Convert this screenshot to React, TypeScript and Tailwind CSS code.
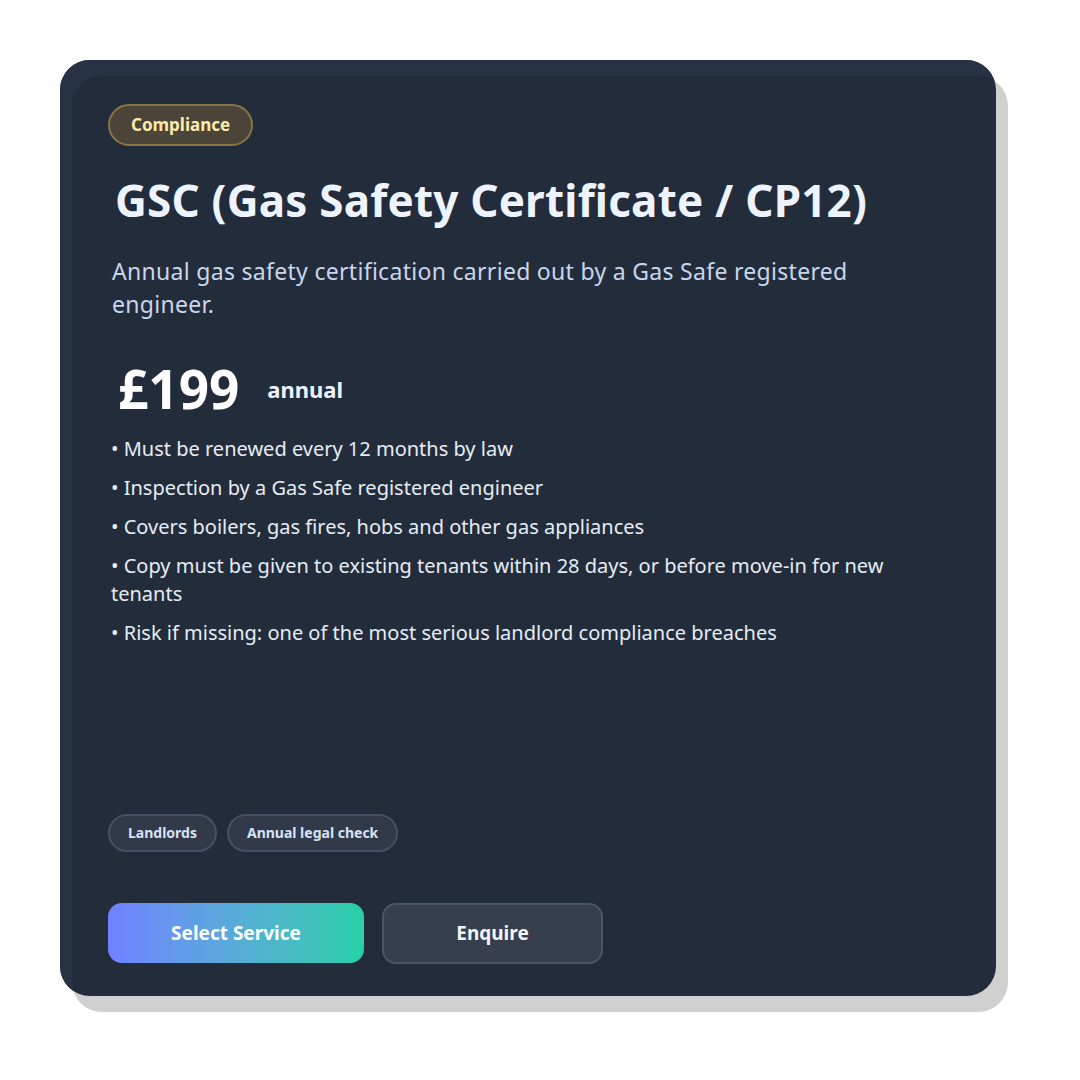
export default function App() {
  const bullets = [
    "Must be renewed every 12 months by law",
    "Inspection by a Gas Safe registered engineer",
    "Covers boilers, gas fires, hobs and other gas appliances",
    "Copy must be given to existing tenants within 28 days, or before move-in for new tenants",
    "Risk if missing: one of the most serious landlord compliance breaches",
  ];
  const tags = ["Landlords", "Annual legal check"];

  return (
    <div className="min-h-screen bg-white p-[60px] font-['Noto_Sans',sans-serif]">
      <div className="flex h-[936px] w-[936px] flex-col rounded-[30px] bg-[#232c3b] px-[48px] pt-[44px] pb-[32px] shadow-[12px_16px_0_#d0d0d0,inset_12px_16px_0_#273244]">
        {/* Category badge */}
        <div className="flex">
          <span className="rounded-full border-2 border-[#8a7544] bg-[#4a4538] px-[21px] py-[7px] text-[17px] font-bold leading-[24px] text-[#fde9a8]">
            Compliance
          </span>
        </div>

        <h1 className="mt-[26px] pl-[7px] text-[44px] font-bold leading-[56px] tracking-[0.2px] text-[#eef4ff]">
          GSC (Gas Safety Certificate / CP12)
        </h1>

        <p className="mt-[27px] w-[780px] pl-[4px] text-[23px] leading-[33px] tracking-[0.3px] text-[#c9d6ec]">
          Annual gas safety certification carried out by a Gas Safe registered engineer.
        </p>

        <div className="mt-[36px] flex items-center gap-[28px] pl-[10px]">
          <span className="text-[53px] font-bold leading-[64px] text-white">£199</span>
          <span className="text-[22px] font-bold text-[#eef2fa]">annual</span>
        </div>

        <ul className="mt-[14px] flex w-[800px] flex-col gap-[11px] pl-[3px] text-[20px] leading-[28px] text-[#e6ecf6]">
          {bullets.map((b) => (
            <li key={b}>• {b}</li>
          ))}
        </ul>

        <div className="mt-auto flex gap-[10px]">
          {tags.map((t) => (
            <span
              key={t}
              className="rounded-full border-2 border-[#465064] bg-[#323a4a] px-[18px] py-[7px] text-[14px] font-bold leading-[20px] text-[#d8e2f6]"
            >
              {t}
            </span>
          ))}
        </div>

        <div className="mt-[51px] flex gap-[18px]">
          <button className="h-[60px] w-[256px] rounded-[14px] bg-gradient-to-r from-[#7080ff] to-[#26d0a8] text-[19px] font-bold text-white">
            Select Service
          </button>
          <button className="h-[61px] w-[221px] rounded-[14px] border-2 border-[#4c5467] bg-[#373e4d] text-[19px] font-bold text-[#f2f5fa]">
            Enquire
          </button>
        </div>
      </div>
    </div>
  );
}
